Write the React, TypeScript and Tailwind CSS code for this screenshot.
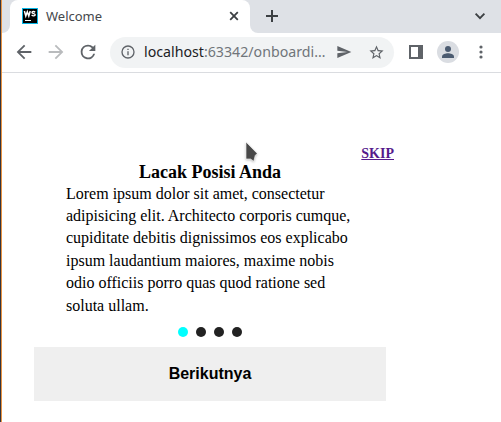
import type { ReactNode } from "react";

function MaterialIcon({ size, className, children }: { size: number; className?: string; children: ReactNode }) {
  return (
    <svg width={size} height={size} viewBox="0 0 24 24" fill="currentColor" className={`shrink-0 ${className ?? ""}`}>
      {children}
    </svg>
  );
}

function TabStrip() {
  return (
    <div className="flex h-[33px] bg-[#dee1e6]">
      <div className="flex w-2 bg-white">
        <div className="w-full rounded-br-[8px] bg-[#dee1e6]" />
      </div>
      <div className="flex w-[240px] items-center rounded-t-[8px] bg-white pb-px pl-3 pr-2">
        <svg width="16" height="16" viewBox="0 0 16 16" className="shrink-0">
          <rect width="16" height="16" fill="#08b5e5" />
          <rect x="1" y="1" width="14" height="14" fill="#000" />
          <path d="M2.4 3 3.8 8 5.3 3.8 6.8 8 8.2 3" fill="none" stroke="#fff" strokeWidth="1.5" />
          <path d="M13.2 4.3C12 3.2 10 3.3 10 4.6c0 1.4 3.2.7 3.2 2.2 0 1.4-2.4 1.4-3.6.3" fill="none" stroke="#fff" strokeWidth="1.4" />
          <rect x="3" y="12" width="6" height="1" fill="#fff" />
        </svg>
        <span className="ml-2 text-[13px] leading-4 text-[#45484c]">Welcome</span>
        <svg width="16" height="16" viewBox="0 0 16 16" className="ml-auto" stroke="#3c4043" strokeWidth="1.8">
          <path d="m4.2 4.2 7.6 7.6M11.8 4.2l-7.6 7.6" />
        </svg>
      </div>
      <div className="flex flex-1 bg-white">
        <div className="flex flex-1 items-center rounded-bl-[8px] bg-[#dee1e6] pb-px pl-[14px] pr-[13px]">
          <svg width="16" height="16" viewBox="0 0 16 16" stroke="#3c4043" strokeWidth="2">
            <path d="M8 2v12M2 8h12" />
          </svg>
          <svg width="16" height="16" viewBox="0 0 16 16" fill="none" stroke="#3c4043" strokeWidth="1.9" className="ml-auto">
            <path d="m3.6 5.7 4.4 4.4 4.4-4.4" />
          </svg>
        </div>
      </div>
    </div>
  );
}

function Toolbar() {
  return (
    <div className="flex h-10 items-center border-b border-[#dadce0] pb-px pl-[11px] text-[#5f6368]">
      <MaterialIcon size={22}><path d="M20 11H7.83l5.59-5.59L12 4l-8 8 8 8 1.41-1.41L7.83 13H20v-2z" /></MaterialIcon>
      <MaterialIcon size={22} className="ml-[10px] text-[#b9bbbd]"><path d="m12 4-1.41 1.41L16.17 11H4v2h12.17l-5.58 5.59L12 20l8-8z" /></MaterialIcon>
      <MaterialIcon size={22} className="ml-[10px]"><path d="M17.65 6.35A7.96 7.96 0 0 0 12 4a8 8 0 1 0 7.73 10h-2.08A6 6 0 1 1 12 6c1.66 0 3.14.69 4.22 1.78L13 11h7V4z" /></MaterialIcon>
      <div className="ml-[11px] flex h-[31px] w-[284px] items-center rounded-full bg-[#f1f3f4] pl-[10px]">
        <MaterialIcon size={16}><path d="M11 7h2v2h-2zm0 4h2v6h-2zm1-9a10 10 0 1 0 0 20 10 10 0 0 0 0-20zm0 18a8 8 0 1 1 0-16 8 8 0 0 1 0 16z" /></MaterialIcon>
        <div className="ml-2 w-[192px] whitespace-nowrap text-[14.2px] leading-5 text-[#70757a]">
          <span className="text-[#202124]">localhost</span>:63342/onboardi…
        </div>
        <MaterialIcon size={16}><path d="M2 21 23 12 2 3v7l15 2-15 2z" /></MaterialIcon>
        <MaterialIcon size={17} className="ml-4"><path d="m22 9.24-7.19-.62L12 2 9.19 8.63 2 9.24l5.46 4.73L5.82 21 12 17.27 18.18 21l-1.63-7.03L22 9.24zM12 15.4l-3.76 2.27 1-4.28-3.32-2.88 4.38-.38L12 6.1l1.71 4.04 4.38.38-3.32 2.88 1 4.28L12 15.4z" /></MaterialIcon>
      </div>
      <div className="ml-[15px] h-[14px] w-[14px] border-2 border-r-[5px] border-[#5f6368]" />
      <div className="ml-[14px] flex h-[22px] w-[22px] items-center justify-center rounded-full bg-[#dadde2] text-[#4b5b70]">
        <svg width="12" height="12" viewBox="0 0 12 12" fill="currentColor">
          <circle cx="6" cy="3" r="3" />
          <path d="M0 12v-1.6C0 8.3 3.7 7.2 6 7.2s6 1.1 6 3.2V12z" />
        </svg>
      </div>
      <svg width="4" height="14" viewBox="0 0 4 14" fill="#5f6368" className="ml-5">
        <circle cx="2" cy="2" r="1.6" /><circle cx="2" cy="7" r="1.6" /><circle cx="2" cy="12" r="1.6" />
      </svg>
    </div>
  );
}

function Pointer() {
  return (
    <svg width="18" height="26" viewBox="0 0 18 26" className="absolute left-[242px] top-[139px] drop-shadow-[0_1px_1px_rgba(0,0,0,0.25)]">
      <path d="M4 3v17h4.5l3.3 2.2 1.4-5.6 2-2.2z" fill="#484848" stroke="#fff" strokeWidth="0.6" />
    </svg>
  );
}

export default function App() {
  return (
    <div className="relative flex h-[422px] w-[501px] overflow-hidden bg-white">
      <div className="w-[2px] shrink-0 border-r border-[#e99443] bg-[#34353e]" />
      <div className="flex min-w-0 flex-1 flex-col font-['Noto_Sans',sans-serif]">
        <TabStrip />
        <Toolbar />
        <main className="ml-8 w-[352px] pt-[73px] font-['Liberation_Serif',serif] text-black">
          <div className="-mr-2 flex h-4 justify-end">
            <a href="#skip" className="text-[14px] font-bold leading-4 text-[#551a8b] underline">SKIP</a>
          </div>
          <h1 className="text-center text-[18px] font-bold leading-[21px]">Lacak Posisi Anda</h1>
          <p className="mx-8 -mt-[0.4px] text-[16px] leading-[22.4px]">
            Lorem ipsum dolor sit amet, consectetur adipisicing elit. Architecto corporis cumque, cupiditate debitis dignissimos eos explicabo ipsum laudantium maiores, maxime nobis odio officiis porro quas quod ratione sed soluta ullam.
          </p>
          <div className="mt-[10px] flex justify-center gap-2">
            <span className="h-[10px] w-[10px] rounded-full bg-[#00ffff]" />
            <span className="h-[10px] w-[10px] rounded-full bg-[#222222]" />
            <span className="h-[10px] w-[10px] rounded-full bg-[#222222]" />
            <span className="h-[10px] w-[10px] rounded-full bg-[#222222]" />
          </div>
          <button className="mt-[10px] h-[54px] w-full bg-[#efefef] font-['Liberation_Sans',sans-serif] text-[16px] font-bold">Berikutnya</button>
        </main>
      </div>
      <Pointer />
    </div>
  );
}
